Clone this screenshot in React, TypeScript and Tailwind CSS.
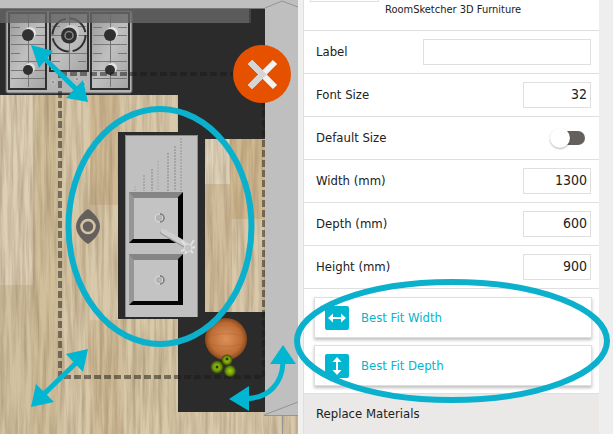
import { ReactNode, useState } from 'react'
import { twMerge } from 'tailwind-merge'

const INPUT_CLASSNAME =
  'h-[26px] w-[68px] border border-[#dfdfdf] bg-white px-[3px] pb-0.5 text-right text-sm text-[#212121] outline-none'

const KNOBS = [
  { x: 28, y: 35, r: 6 },
  { x: 28, y: 70, r: 5 },
  { x: 110, y: 35, r: 6 },
  { x: 110, y: 70, r: 5 },
]

const RIDGES = [
  { x: 135, top: 186, opacity: 0.05 },
  { x: 144, top: 175, opacity: 0.12 },
  { x: 152, top: 169, opacity: 0.14 },
  { x: 158, top: 161, opacity: 0.06 },
  { x: 168, top: 153, opacity: 0.14 },
  { x: 175, top: 146, opacity: 0.14 },
  { x: 181, top: 138, opacity: 0.1 },
]

const PLANKS = [
  { x: 0, y: 95, w: 33, h: 190, color: '#dfd3bb' },
  { x: 33, y: 95, w: 25, h: 339, color: '#cdbb93' },
  { x: 58, y: 182, w: 32, h: 130, color: '#d6c6a4' },
  { x: 90, y: 95, w: 30, h: 110, color: '#cdb48b' },
  { x: 0, y: 285, w: 33, h: 149, color: '#cfbe9c' },
  { x: 90, y: 320, w: 34, h: 114, color: '#cfb993' },
  { x: 124, y: 319, w: 54, h: 115, color: '#d9caa8' },
  { x: 205, y: 139, w: 25, h: 45, color: '#e4dac4' },
  { x: 230, y: 139, w: 35, h: 80, color: '#ccb083' },
  { x: 205, y: 184, w: 27, h: 128, color: '#d0ba97' },
]

function Cooktop() {
  return (
    <g>
      <rect x="6" y="11" width="126" height="82" rx="2" fill="#b4b4b4" stroke="#666" />
      <rect x="9" y="13" width="37" height="76" fill="url(#steel)" stroke="#303030" strokeWidth="2" />
      <rect x="50" y="13" width="38" height="58" fill="url(#steel)" stroke="#303030" strokeWidth="2" />
      <rect x="91" y="13" width="38" height="76" fill="url(#steel)" stroke="#303030" strokeWidth="2" />
      <g stroke="#777">
        <path d="M11 44.5h34M11 61.5h34M11 78.5h34M93 44.5h34M93 61.5h34M93 78.5h34" />
        <path d="M28.5 14v73M110.5 14v73M69.5 14v56M51 35.5h36M51 53.5h36" />
        <path d="M11 27.5h9M36 27.5h9M11 35.5h34M11 53.5h9M36 53.5h9M11 70.5h34" />
        <path d="M93 27.5h9M118 27.5h9M93 35.5h34M93 53.5h9M118 53.5h9M93 70.5h34" />
        <path d="M52 26.5h8M78 26.5h8M52 61.5h8M78 61.5h8" />
      </g>
      {KNOBS.map(({ x, y, r }) => (
        <g key={`${x}-${y}`}>
          <circle cx={x + 2} cy={y - 2} r={r} fill="#e2e2e2" />
          <circle cx={x} cy={y} r={r} fill="#303030" />
        </g>
      ))}
      <circle cx="69" cy="35" r="16.5" fill="none" stroke="#303030" strokeWidth="2" strokeDasharray="22 4" />
      <circle cx="71" cy="33" r="8" fill="#d0d0d0" />
      <circle cx="69" cy="35.5" r="8" fill="#303030" />
      <circle cx="69" cy="35.5" r="4" fill="none" stroke="#8a8a8a" strokeWidth="1.5" />
      <g fill="#959595" stroke="#ccc">
        <circle cx="53" cy="82" r="2" />
        <circle cx="65" cy="76" r="2" />
        <circle cx="77" cy="79" r="2" />
        <circle cx="84" cy="84" r="2" />
      </g>
    </g>
  )
}

function Basin({ y }: { y: number }) {
  return (
    <g transform={`translate(129 ${y})`}>
      <path d="M0 0h54l-5 6H5V46L0 51z" fill="#858585" />
      <path d="M0 0l5 6v40l-5 5z" fill="#969696" />
      <path d="M54 0v51H0l4-4h45V5z" fill="#050505" />
      <rect x="5" y="6" width="44" height="40" fill="#c3c3c3" />
      <circle cx="30" cy="26" r="4" fill="#b4b4b4" stroke="#ddd" />
      <path d="M31 22a4 4 0 0 1 0 8" fill="none" stroke="#777" strokeWidth="1.5" />
    </g>
  )
}

function SinkIsland() {
  return (
    <g>
      <rect x="118" y="132" width="86" height="187" fill="#2b2b2b" />
      <rect x="125" y="135" width="73" height="182" fill="#c0c0c0" />
      <path d="M125.5 317V135.5H197.5V317" fill="none" stroke="#8b8b8b" />
      {RIDGES.map(({ x, top, opacity }) => (
        <path
          key={x}
          d={`M${x} ${top}V191`}
          stroke="#000"
          strokeWidth="2"
          strokeDasharray="2 1"
          opacity={opacity}
        />
      ))}
      <Basin y={192} />
      <Basin y={254} />
      <path d="M163 232l24 14" stroke="#9a9a9a" strokeWidth="6" strokeLinecap="round" />
      <path d="M163 231l24 14" stroke="#cfcfcf" strokeWidth="5" strokeLinecap="round" />
      <path d="M182 241l11 12M194 240l-9 14M181 251l14-4" stroke="#e2e2e2" strokeWidth="2" />
      <circle cx="188" cy="248" r="4" fill="#c4c4c4" stroke="#ddd" />
    </g>
  )
}

function FloorPlan() {
  return (
    <svg
      className="block h-full w-full"
      viewBox="0 0 298 434"
      preserveAspectRatio="xMaxYMin slice"
      role="img"
      aria-label="Kitchen floor plan"
    >
      <defs>
        <linearGradient id="steel" x1="0" y1="0" x2="1" y2="1">
          <stop offset="0" stopColor="#999" />
          <stop offset="0.5" stopColor="#c0c0c0" />
          <stop offset="1" stopColor="#a4a4a4" />
        </linearGradient>
        <radialGradient id="bowl">
          <stop offset="0" stopColor="#dc9158" />
          <stop offset="0.75" stopColor="#bd6d35" />
          <stop offset="1" stopColor="#8a481b" />
        </radialGradient>
        <radialGradient id="apple">
          <stop offset="0" stopColor="#a4cf13" />
          <stop offset="0.6" stopColor="#70990b" />
          <stop offset="1" stopColor="#30430a" />
        </radialGradient>
        <filter id="grain" x="0" y="0" width="100%" height="100%" colorInterpolationFilters="sRGB">
          <feTurbulence type="fractalNoise" baseFrequency="0.22 0.012" numOctaves="4" seed="7" />
          <feColorMatrix values="0 0 0 0 0.56  0 0 0 0 0.46  0 0 0 0 0.34  1 0 0 0 -0.36" />
        </filter>
      </defs>

      <rect width="298" height="434" fill="#d8c9aa" />
      {PLANKS.map(({ x, y, w, h, color }) => (
        <rect key={`${x}-${y}`} x={x} y={y} width={w} height={h} fill={color} opacity="0.7" />
      ))}
      <rect width="298" height="434" filter="url(#grain)" />

      <rect width="298" height="8" fill="#bfbfbf" />
      <rect y="8" width="265" height="87" fill="#2b2b2b" />
      <path d="M178 95h87v44h-60v173h60v100h-87z" fill="#2b2b2b" />
      <Cooktop />
      <path d="M0 8h250v15H0z" fill="#686868" opacity="0.8" />
      <path d="M249 9h2v14h-2z" fill="#444" />
      <path d="M0 8.5h265" stroke="#777" />

      <path
        d="M60 74H264V377H60z"
        fill="none"
        stroke="#1c1916"
        strokeWidth="4"
        strokeDasharray="7 3"
        opacity="0.5"
      />
      <SinkIsland />

      <rect x="265" width="33" height="415" fill="#bfbfbf" />
      <path d="M265 8l17-7 16 6M264 415.5h34M264 415l34-13M282.5 416v18" fill="none" stroke="#949494" />

      <circle cx="226" cy="339" r="21" fill="url(#bowl)" />
      <path d="M212 328q14-6 28 0M210 336q16-5 32 0M210 344q16 5 32 0" fill="none" stroke="#a95c2a" opacity="0.3" />
      <circle cx="227" cy="360" r="5.5" fill="url(#apple)" />
      <circle cx="217" cy="367" r="6.5" fill="url(#apple)" />
      <circle cx="230" cy="371" r="6" fill="url(#apple)" />
      <g fill="#2b3b08">
        <circle cx="227" cy="359" r="1.5" />
        <circle cx="217" cy="367" r="1.5" />
      </g>

      <path d="M88 209c5 3 12 10 12 17.5S93 241 88 244c-5-3-12-10-12-17.500S83 212 88 209z" fill="#66605c" />
      <circle cx="88" cy="226.5" r="6.5" fill="#66605c" stroke="#d4c5a4" strokeWidth="2.5" />

      <ellipse cx="160" cy="226.5" rx="91.5" ry="117.5" fill="none" stroke="#0bb0cd" strokeWidth="6" />

      <g fill="#00b6d1">
        <path d="M31 45l22 6-14 17zM88 102l-5-22-17 18z" />
        <path d="M88 349l-22 5 17 18zM31 407l5-23 18 18z" />
        <path d="M283 345l-13 19h26zM229 399l20-13v25z" />
      </g>
      <g fill="none" stroke="#00b6d1" strokeWidth="5">
        <path d="M43 57l35 34M43 395l35-34M248 398.5c20-1 34-14 35-36" />
      </g>
    </svg>
  )
}

function CloseButton() {
  return (
    <button
      type="button"
      aria-label="Close"
      className="absolute top-[45px] right-[7px] size-[58px] rounded-full bg-[#e65100]"
    >
      <svg className="block size-full" viewBox="0 0 58 58" fill="none" strokeWidth="6">
        <path d="M17 17l25 25M42 17L17 42" stroke="#f3f3f3" />
        <path d="M17 17l12.5 12.5L17 42" stroke="#d5d5d5" />
      </svg>
    </button>
  )
}

interface RowProps {
  id: string
  label: string
  children: ReactNode
}

function Row({ id, label, children }: RowProps) {
  return (
    <div className="flex h-[43px] items-center justify-between border-t border-[#dfdfdf] pr-2 pl-3">
      <label htmlFor={id}>{label}</label>
      {children}
    </div>
  )
}

interface FieldProps {
  id: string
  label: string
  initialValue: string
  className?: string
}

function Field({ id, label, initialValue, className }: FieldProps) {
  const [value, setValue] = useState(initialValue)

  return (
    <Row id={id} label={label}>
      <input
        id={id}
        type="text"
        value={value}
        onChange={(e) => setValue(e.target.value)}
        className={twMerge(INPUT_CLASSNAME, className)}
      />
    </Row>
  )
}

function FitButton({ label, vertical }: { label: string; vertical?: boolean }) {
  return (
    <button
      type="button"
      className="flex h-[41px] w-full items-center gap-3 border border-[#dfdfdf] bg-white px-2.5 text-[#00b6d1] shadow-[0_2px_3px_rgba(0,0,0,0.25)]"
    >
      <svg className="size-6 shrink-0" viewBox="0 0 24 24" aria-hidden="true">
        <rect width="24" height="24" rx="2" fill="#00b6d1" />
        <g transform={vertical ? 'rotate(90 12 12)' : undefined}>
          <path d="M3 12l5-4.5v9zM21 12l-5-4.5v9z" fill="#fff" />
          <path d="M7 12h10" stroke="#fff" strokeWidth="2" />
        </g>
      </svg>
      {label}
    </button>
  )
}

export default function App() {
  const [defaultSize, setDefaultSize] = useState(false)

  return (
    <div className="flex min-h-screen overflow-hidden bg-white font-['DejaVu_Sans_Condensed','DejaVu_Sans',sans-serif] text-[13px] leading-4 text-[#212121]">
      <main className="relative min-w-0 flex-1">
        <FloorPlan />
        <CloseButton />
      </main>

      <aside className="relative flex w-[315px] shrink-0 border-l-[5px] border-[#f0f0ef]">
        <div className="min-w-0 flex-1 border-l border-[#dfdfdf]">
          <header className="flex h-[30px] items-start pl-1.5">
            <div className="h-0.5 w-[69px] border-x border-b border-[#dfdfdf]" />
            <h1 className="pt-0.5 pl-1.5 text-[11px] leading-4">RoomSketcher 3D Furniture</h1>
          </header>

          <Field id="label" label="Label" initialValue="" className="w-[168px] text-left" />
          <Field id="font-size" label="Font Size" initialValue="32" />
          <Row id="default-size" label="Default Size">
            <input
              id="default-size"
              type="checkbox"
              role="switch"
              checked={defaultSize}
              onChange={(e) => setDefaultSize(e.target.checked)}
              className="mr-1.5 flex h-3.5 w-[35px] appearance-none items-center rounded-full bg-linear-to-r from-transparent from-30% to-[#66605c] to-30% before:size-5 before:shrink-0 before:rounded-full before:bg-white before:shadow-[0_1px_2px_rgba(0,0,0,0.3)] checked:justify-end"
            />
          </Row>
          <Field id="width" label="Width (mm)" initialValue="1300" />
          <Field id="depth" label="Depth (mm)" initialValue="600" />
          <Field id="height" label="Height (mm)" initialValue="900" />

          <div className="flex flex-col gap-[7px] border-y border-[#dfdfdf] pt-2 pr-[7px] pb-[7px] pl-2.5">
            <FitButton label="Best Fit Width" />
            <FitButton label="Best Fit Depth" vertical />
          </div>

          <h2 className="flex h-10 items-center bg-[#eae9e7] pl-3">Replace Materials</h2>
        </div>
        <div className="w-3.5 shrink-0 bg-[#eee]" />

        <svg
          className="pointer-events-none absolute top-[279px] -left-[9px] h-[124px] w-[316px]"
          viewBox="0 0 316 124"
          fill="none"
          aria-hidden="true"
        >
          <ellipse cx="158" cy="62" rx="155" ry="59" stroke="#0bb0cd" strokeWidth="6" />
        </svg>
      </aside>
    </div>
  )
}
